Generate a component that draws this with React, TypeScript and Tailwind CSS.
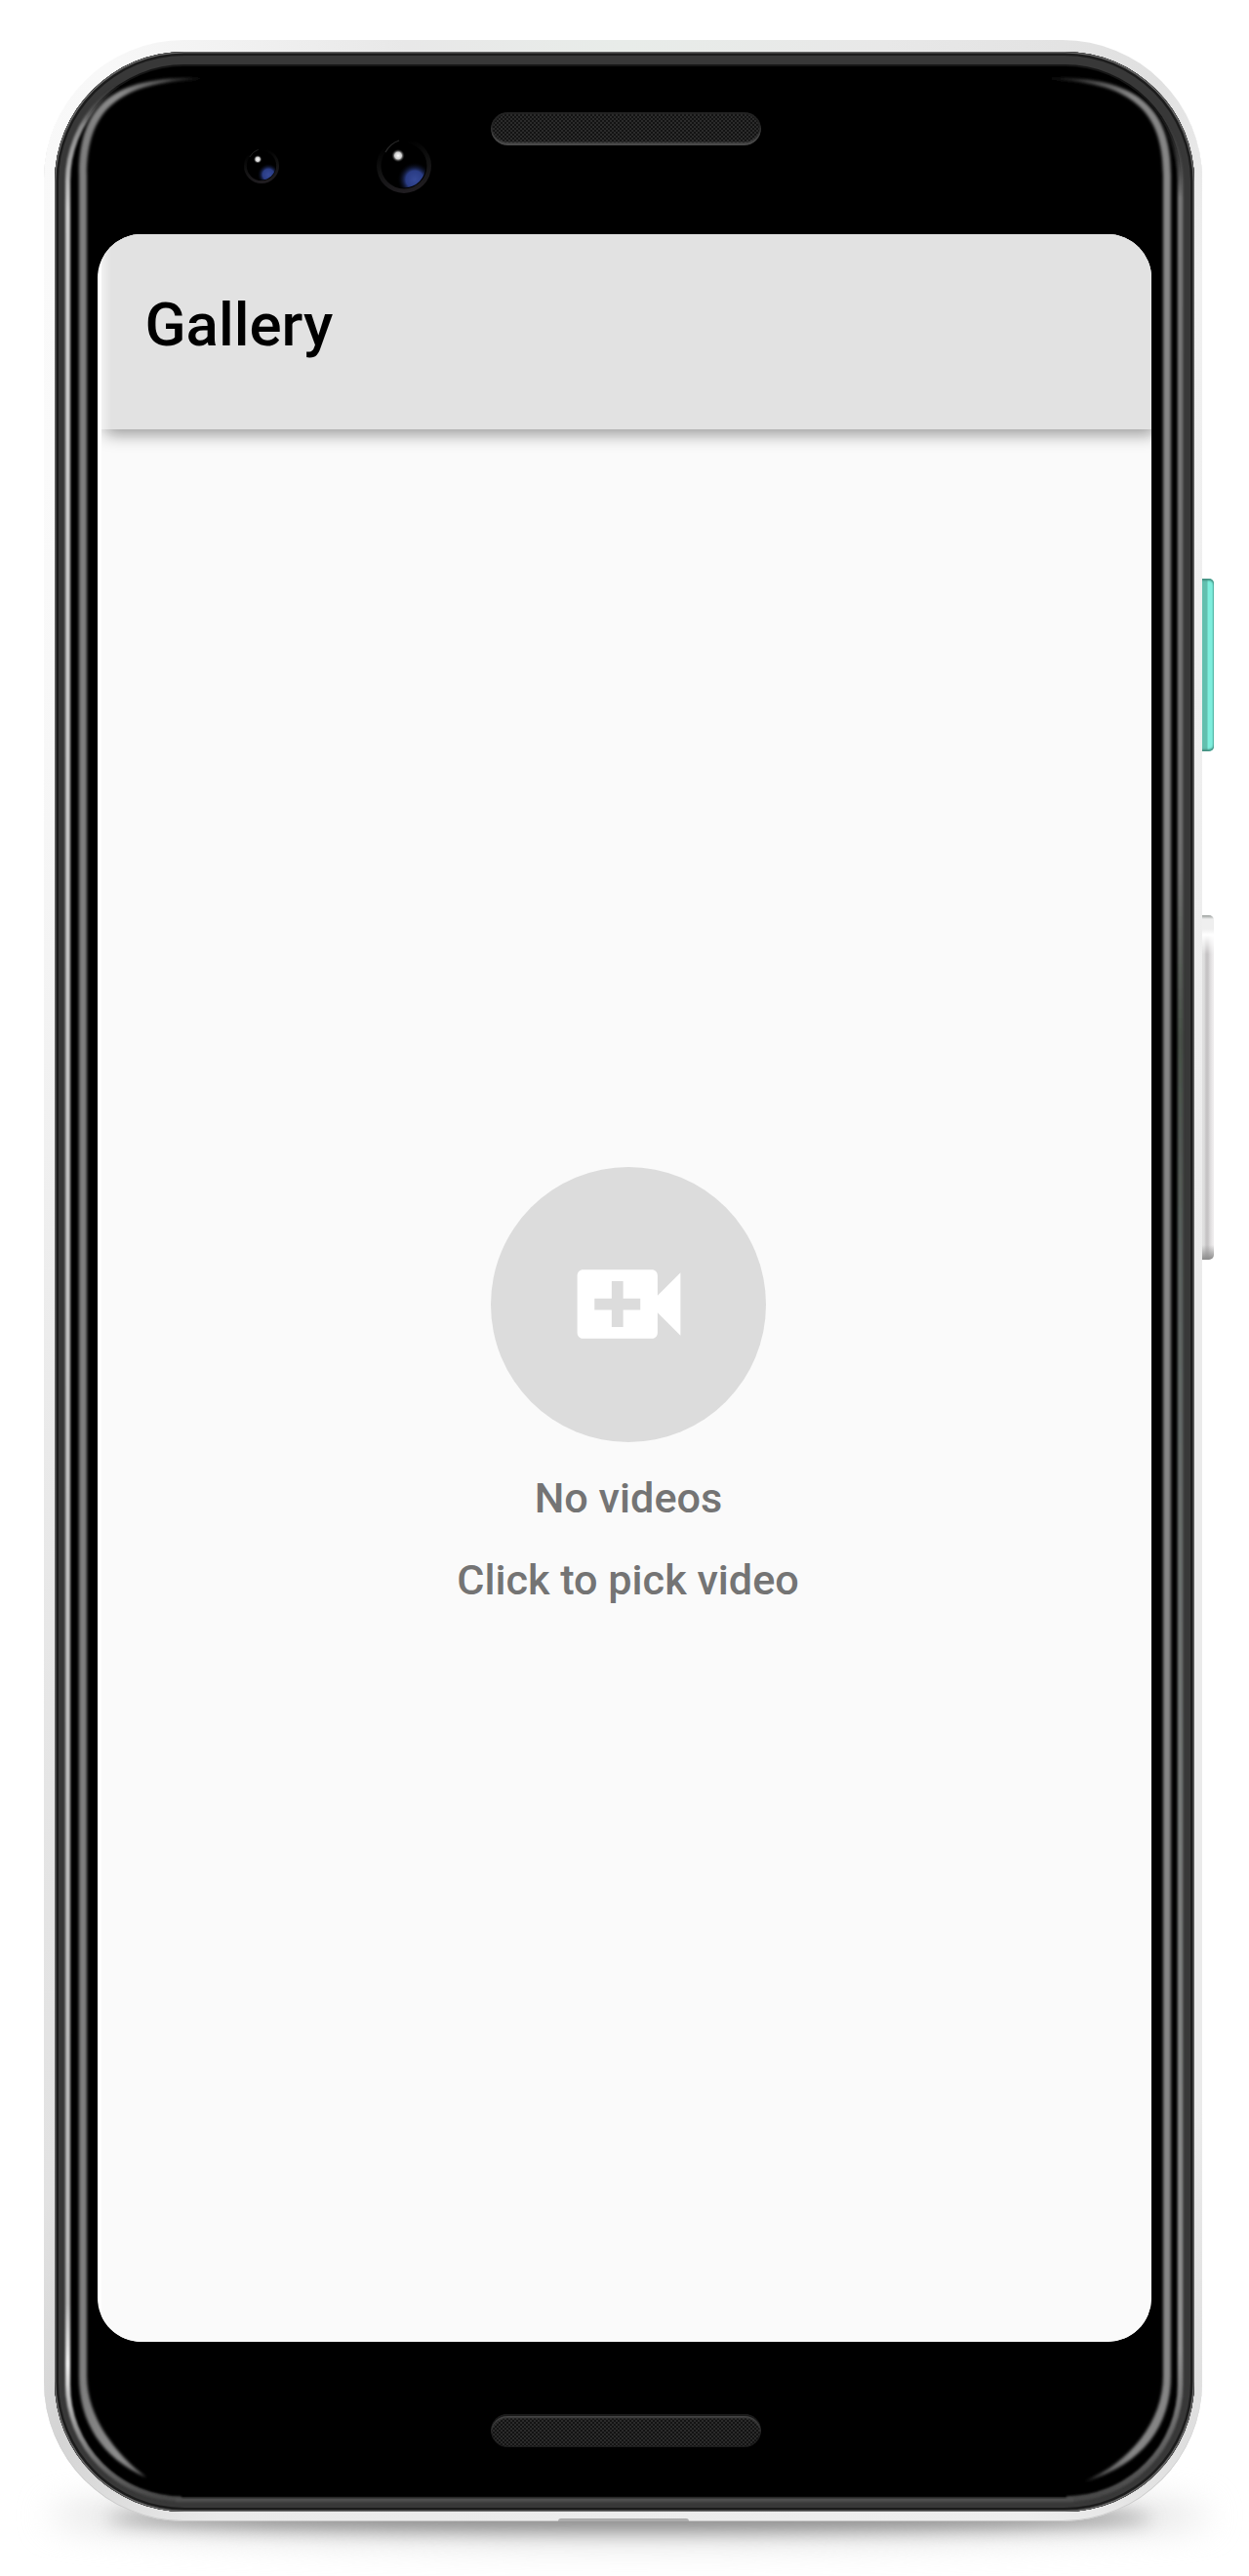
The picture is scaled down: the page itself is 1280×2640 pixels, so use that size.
import { MdVideoCall } from "react-icons/md";

/** Perforated speaker grille. */
function Speaker({ flip = false }: { flip?: boolean }) {
  return (
    <div
      className={
        "h-[34px] w-[277px] rounded-full bg-[#111111] bg-[repeating-conic-gradient(#2b2b2b_0_25%,#131313_0_50%)] bg-[length:4px_4px] " +
        (flip
          ? "shadow-[inset_0_2px_0_#191919,inset_0_4px_2px_#444444,inset_0_0_0_1px_#1c1c1c]"
          : "shadow-[inset_0_-3px_2px_#4a4a4a,inset_0_0_0_2px_#222222]")
      }
    />
  );
}

/** Front-facing camera lens. */
function Lens({ size }: { size: number }) {
  return (
    <svg width={size} height={size} viewBox="0 0 56 56" className="block shrink-0">
      <defs>
        <radialGradient id={`blue${size}`} gradientUnits="userSpaceOnUse" cx="39" cy="42" r="18">
          <stop offset="0" stopColor="#364a98" />
          <stop offset="0.5" stopColor="#2a3c84" />
          <stop offset="1" stopColor="#000000" stopOpacity="0" />
        </radialGradient>
        <radialGradient id={`spot${size}`}>
          <stop offset="0" stopColor="#ffffff" />
          <stop offset="0.5" stopColor="#cccccc" />
          <stop offset="1" stopColor="#000000" stopOpacity="0" />
        </radialGradient>
        <linearGradient id={`rim${size}`} x1="0.35" y1="0" x2="0.6" y2="1">
          <stop offset="0.1" stopColor="#000000" />
          <stop offset="0.5" stopColor="#111111" />
          <stop offset="1" stopColor="#211e22" />
        </linearGradient>
      </defs>
      <circle cx="28" cy="28" r="28" fill={`url(#rim${size})`} />
      <circle cx="28" cy="28" r="23.5" fill="#000000" />
      <circle cx="28" cy="28" r="22.5" fill={`url(#blue${size})`} />
      <path d="M9 14Q14 5 23 2" stroke="#2a2a2a" strokeWidth="1.2" fill="none" />
      <circle cx="22" cy="17.500" r="7" fill={`url(#spot${size})`} />
    </svg>
  );
}

/** Reflections that run along the curved glass edge. */
function GlassReflections() {
  return (
    <svg className="pointer-events-none absolute left-0 top-0" width="1280" height="2640" viewBox="0 0 1280 2640" fill="none">
      <defs>
        <linearGradient id="outerLeft" gradientUnits="userSpaceOnUse" x1="0" y1="66" x2="0" y2="2560">
          <stop offset="0.008" stopColor="#383838" stopOpacity="0" />
          <stop offset="0.025" stopColor="#888888" />
          <stop offset="0.06" stopColor="#cccccc" />
          <stop offset="0.92" stopColor="#b8b8b8" />
          <stop offset="0.945" stopColor="#f0f0f0" />
          <stop offset="0.97" stopColor="#999999" />
          <stop offset="1" stopColor="#484848" />
        </linearGradient>
        <linearGradient id="outerRight" gradientUnits="userSpaceOnUse" x1="0" y1="66" x2="0" y2="2560">
          <stop offset="0.02" stopColor="#383838" stopOpacity="0" />
          <stop offset="0.055" stopColor="#777777" />
          <stop offset="0.33" stopColor="#707070" />
          <stop offset="0.4" stopColor="#485048" />
          <stop offset="0.5" stopColor="#5d6361" />
          <stop offset="0.94" stopColor="#909090" />
          <stop offset="1" stopColor="#484848" />
        </linearGradient>
        <linearGradient id="innerLeft" gradientUnits="userSpaceOnUse" x1="80" y1="0" x2="215" y2="0">
          <stop offset="0" stopColor="#7c7c7c" />
          <stop offset="0.3" stopColor="#8c8c8c" />
          <stop offset="0.65" stopColor="#555555" />
          <stop offset="1" stopColor="#000000" />
        </linearGradient>
        <linearGradient id="innerRight" gradientUnits="userSpaceOnUse" x1="1200" y1="0" x2="1066" y2="0">
          <stop offset="0" stopColor="#858585" />
          <stop offset="0.3" stopColor="#858585" />
          <stop offset="0.65" stopColor="#444444" />
          <stop offset="1" stopColor="#000000" />
        </linearGradient>
        <filter id="soft" filterUnits="userSpaceOnUse" x="0" y="0" width="1280" height="2640">
          <feGaussianBlur stdDeviation="1.1" />
        </filter>
        <filter id="softer" filterUnits="userSpaceOnUse" x="0" y="0" width="1280" height="2640">
          <feGaussianBlur stdDeviation="1.4" />
        </filter>
      </defs>
      <g filter="url(#soft)">
        <path d="M186 68.500A117 117 0 0 0 69.500 185V2444A117 117 0 0 0 186 2561" stroke="url(#outerLeft)" strokeWidth="5" />
        <path d="M1093 68.500A117 117 0 0 1 1209.500 185V2444A117 117 0 0 1 1093 2561" stroke="url(#outerRight)" strokeWidth="5.500" />
        <path d="M180 2562H1100" stroke="#505050" strokeWidth="4" />
      </g>
      <g filter="url(#softer)">
        <path
          d="M212 80.500C115 76 81 108 81 180V2435C81 2482 104 2519 150 2539C119 2515 89 2478 89 2435V180C89 113 120 83 212 81Z"
          fill="url(#innerLeft)"
        />
        <path
          d="M1068 80.500C1165 76 1200 110 1200 180V2435C1200 2485 1172 2526 1112 2543C1158 2523 1192 2482 1192 2435V180C1192 113 1160 83 1068 81Z"
          fill="url(#innerRight)"
        />
      </g>
    </svg>
  );
}

function Screen() {
  return (
    <div className="flex h-[2160px] w-[1080px] flex-col overflow-hidden rounded-[45px] bg-white pl-1">
      <div className="relative z-10 -mb-8 shrink-0 overflow-hidden pb-8">
        <header className="h-[200px] bg-[#e2e2e2] bg-[linear-gradient(90deg,#f1f1f1_0,#e2e2e2_10px)] pl-[44.500px] pt-[58px] shadow-[4px_5px_16px_rgba(0,0,0,0.4)]">
          <h1 className="text-[61.800px] font-medium leading-[70px] text-black">Gallery</h1>
        </header>
      </div>
      <main className="flex w-[1080px] flex-1 flex-col items-center bg-[#fafafa] pt-[756px] text-[43.200px] font-medium leading-[50px] text-[#747474]">
        <button className="flex size-[282px] items-center justify-center rounded-full bg-[#dcdcdc] pb-px">
          <MdVideoCall size={141} color="#ffffff" />
        </button>
        <p className="mt-[33px]">No videos</p>
        <p className="mt-[34px] pr-px">Click to pick video</p>
      </main>
    </div>
  );
}

export default function App() {
  return (
    <div className="relative h-[2640px] w-[1280px] overflow-hidden bg-white pl-[45px] pt-[41px] font-[Roboto,sans-serif]">
      {/* ground shadow */}
      <div className="absolute left-[50px] top-[2550px] h-[56px] w-[1190px] rounded-[50%] bg-[#dedede] blur-[17px]" />
      <div className="absolute left-[110px] top-[2568px] h-[26px] w-[1070px] rounded-[50%] bg-[#8c8c8c] blur-[9px]" />

      {/* side buttons */}
      <div className="absolute left-[1226px] top-[593px] h-[177px] w-[18px] rounded-[5px] bg-[linear-gradient(90deg,#62bfae_0_11px,#7eeedd_12px_16px,#70dfcc_18px)] shadow-[inset_0_2px_2px_#438f80,inset_0_-2px_2px_#438f80]" />
      <div className="absolute left-[1226px] top-[938px] h-[353px] w-[18px] overflow-hidden rounded-[5px] bg-[linear-gradient(180deg,#999d9b_0,#efefef_4px_14px,#ffffff_20px,rgba(255,255,255,0)_40px,rgba(255,255,255,0)_338px,#8b8b8b_353px),linear-gradient(90deg,#dedede_0_8px,#c6c4c5_10px_12px,#dcdadb_14px,#efedee_17px)]" />

      {/* aluminium shell */}
      <div className="relative h-[2543px] w-[1187px] rounded-[143px] bg-[conic-gradient(#e8ece9_0deg,#e8e8e8_12deg,#e0e0e0_24deg,#f0f0f0_30deg,#ebebeb_90deg,#ebebeb_145deg,#dedede_154deg,#eeeeee_162deg,#eaeaea_198deg,#d4d4d4_206deg,#e2e2e2_212deg,#ededed_270deg,#fafafa_325deg,#f8f8f8_337deg,#e8e8e8_350deg,#e8ece9_360deg)] pl-[11px] pt-3 shadow-[inset_0_-1px_0_#cccccc]">
        <div className="absolute left-[527px] top-[2540px] h-[3px] w-[134px] rounded-t-[8px] bg-[#adadad]" />
        {/* front glass */}
        <div className="flex h-[2521px] w-[1168px] flex-col items-start rounded-[133px] bg-black pl-11 shadow-[inset_0_0_0_1.500px_#666666,inset_0_0_0_4px_#1c1c1c,inset_0_0_0_13px_#383838,inset_0_0_0_15px_#151515]">
          <div className="flex h-[187px] w-full items-start pl-[150px] pt-[62px]">
            <div className="flex h-[110px] items-center gap-[100px]">
              <Lens size={36} />
              <Lens size={56} />
            </div>
            <div className="ml-[61px]">
              <Speaker />
            </div>
          </div>
          <Screen />
          <div className="pl-[403px] pt-[74px]">
            <Speaker flip />
          </div>
        </div>
      </div>
      <GlassReflections />
    </div>
  );
}
